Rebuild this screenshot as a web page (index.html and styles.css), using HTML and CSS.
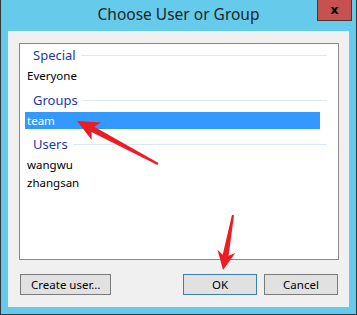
FILE: index.html
```html
<!DOCTYPE html>
<html lang="en">
<head>
    <meta charset="UTF-8">
    <title>Choose User or Group</title>
    <link rel="stylesheet" href="styles.css">
</head>
<body>

    <div class="window">
        <div class="title-bar">
            <span></span>
            <span class="title">Choose User or Group</span>
            <button class="close-btn">x</button>
        </div>

        <div class="client">
            <div class="listbox">
                <div class="group-header first"><span>Special</span></div>
                <div class="item">Everyone</div>

                <div class="group-header"><span>Groups</span></div>
                <div class="item selected">team</div>

                <div class="group-header"><span>Users</span></div>
                <div class="item">wangwu</div>
                <div class="item">zhangsan</div>
            </div>

            <div class="button-row">
                <button class="btn">Create user…</button>
                <span class="spacer"></span>
                <button class="btn btn-default">OK</button>
                <button class="btn">Cancel</button>
            </div>
        </div>

        <!-- red annotation arrows drawn over the dialog -->
        <svg class="arrows" width="357" height="315" viewBox="0 0 357 315">
            <polygon fill="#ec1c24" points="77,121 101.1,122.5 94.3,126.8 158.5,163.1 157.5,164.9 91.5,132.1 91.7,140.1"/>
            <polygon fill="#ec1c24" points="223,270 217.5,249.7 222.7,254.7 232,214.8 234,215.2 228.6,255.7 235.3,252.9"/>
        </svg>
    </div>

</body>
</html>
```

FILE: styles.css
```css
/* Global Styles */
body {
    margin: 0;
    padding: 0;
    background: #ffffff;
    font-family: "Noto Sans", "Open Sans", sans-serif;
}

.window {
    position: relative;
    box-sizing: border-box;
    width: 357px;
    height: 315px;
    background: #66cbea;
    border: 1px solid #2f3a40;
    border-top: 0;
    display: flex;
    flex-direction: column;
}

/* Title bar */
.title-bar {
    height: 31px;
    display: grid;
    grid-template-columns: 1fr auto 1fr;
    align-items: start;
}

.title {
    font-size: 15.5px;
    line-height: 29px;
    color: #1a262c;
}

.close-btn {
    justify-self: end;
    margin-right: 4px;
    width: 35px;
    height: 21px;
    padding: 0;
    background: #c75050;
    border: 1px solid #4a3434;
    border-top: 0;
    color: #000;
    font-family: "DejaVu Sans", sans-serif;
    font-weight: bold;
    font-size: 13px;
    line-height: 16px;
}

/* Client area */
.client {
    box-sizing: border-box;
    margin: 0 7px;
    height: 276px;
    background: #f0f0f0;
    padding: 12px 10px 12px 11px;
    display: flex;
    flex-direction: column;
}

.listbox {
    box-sizing: border-box;
    height: 217px;
    background: #ffffff;
    border: 1px solid #8a8a8a;
    padding-right: 18px;
}

.group-header {
    display: flex;
    align-items: center;
    height: 22px;
    margin-top: 4px;
    margin-right: -7px;
    padding-left: 13px;
    padding-bottom: 1px;
    font-size: 13px;
    color: #2438a8;
}

.group-header.first {
    margin-top: 0;
}

.group-header::after {
    content: "";
    flex: 1;
    height: 1px;
    margin-left: 5px;
    background: #dbe8f4;
}

.item {
    height: 18px;
    line-height: 18px;
    margin-left: 5px;
    padding-left: 2px;
    font-size: 11.5px;
    color: #000;
}

.item.selected {
    height: 17px;
    line-height: 17px;
    background: #3399ff;
    color: #fff;
}

/* Buttons */
.button-row {
    display: flex;
    gap: 7px;
    margin-top: 14px;
    padding: 0 1px;
}

.spacer {
    flex: 1;
}

.btn {
    box-sizing: border-box;
    height: 21px;
    min-width: 74px;
    padding: 0 10px;
    background: #e1e1e1;
    border: 1px solid #7a7a7a;
    font-family: "Noto Sans", sans-serif;
    font-size: 11.5px;
    color: #000;
}

.btn-default {
    border-color: #3c7fb1;
}

.arrows {
    position: absolute;
    top: 0;
    left: -1px;
    pointer-events: none;
}
```
